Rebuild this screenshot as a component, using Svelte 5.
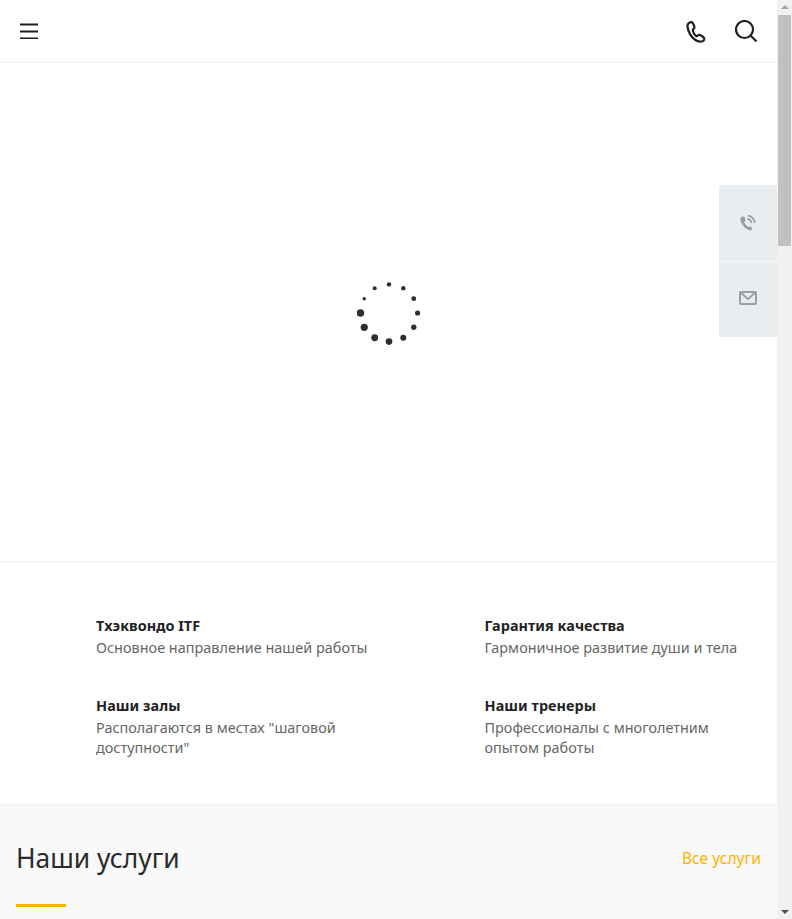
<script>
  const features = [
    { title: 'Тхэквондо ITF', text: 'Основное направление нашей работы' },
    { title: 'Гарантия качества', text: 'Гармоничное развитие души и тела' },
    { title: 'Наши залы', text: 'Располагаются в местах "шаговой доступности"' },
    { title: 'Наши тренеры', text: 'Профессионалы с многолетним опытом работы' }
  ];
  const sizes = [2.2, 2.2, 2.4, 2.6, 2.7, 3, 3.3, 3.4, 3.6, 3.8, 1.7, 2];
  const dots = sizes.map((r, i) => {
    const a = (i * 30 * Math.PI) / 180;
    return { r, x: 32 + 28.6 * Math.sin(a), y: 32 - 28.6 * Math.cos(a) };
  });
</script>

<div class="window">
  <div class="page">
    <header class="header">
      <button class="icon-btn" aria-label="Меню">
        <svg width="18" height="16" viewBox="0 0 18 16"><path d="M0 1.5h18M0 8.5h18M0 15.5h18" stroke="#1f1f1f" stroke-width="2" fill="none"/></svg>
      </button>
      <div class="header-right">
        <button class="icon-btn phone" aria-label="Телефон">
          <svg width="20" height="22" viewBox="0 0 20 22" fill="none" stroke="#1f1f1f" stroke-width="2.2" stroke-linejoin="round"><path d="M4.4 1.2 C2.4 1.8 1.2 3.6 1.6 6 C2.2 10.4 4.8 15.8 9.4 19 C12.2 20.9 16.2 21.4 17.8 19.4 C18.8 18 18.2 16.6 16.6 15.5 C15.2 14.5 13.6 13.6 12.6 14.1 C11.6 14.6 11.2 15.4 10.2 14.9 C8.6 14.1 6.6 10.6 6.8 9 C7 8 8.2 7.8 8.4 6.6 C8.6 5.2 7.6 3.4 6.8 2.2 C6.2 1.2 5.3 0.9 4.4 1.2 Z"/></svg>
        </button>
        <button class="icon-btn" aria-label="Поиск">
          <svg width="22" height="22" viewBox="0 0 22 22" fill="none" stroke="#1f1f1f" stroke-width="2.2"><circle cx="9.5" cy="9.5" r="8.5"/><path d="M15.8 15.8 21.5 21.5"/></svg>
        </button>
      </div>
    </header>

    <section class="hero">
      <svg class="spinner" width="64" height="64" viewBox="0 0 64 64">
        {#each dots as d}
          <circle cx={d.x} cy={d.y} r={d.r} fill="#2f2f2f"/>
        {/each}
      </svg>
    </section>

    <section class="features">
      {#each features as f}
        <div class="feature">
          <div class="f-title">{f.title}</div>
          <div class="f-text">{f.text}</div>
        </div>
      {/each}
    </section>

    <section class="services">
      <div class="services-head">
        <h2>Наши услуги</h2>
        <a href="#services">Все услуги</a>
      </div>
      <div class="rule"></div>
    </section>

    <aside class="side">
      <div class="side-item">
        <svg width="18" height="18" viewBox="0 0 18 18" fill="none"><path d="M3.2 2.6 C1.6 3.4 1 5 1.6 7 C2.6 10.4 6 14.6 9.6 16 C11.4 16.6 13 16.2 13.6 14.8 L11.2 12 L9.4 13 C8 12.4 5.6 9.4 5.2 7.8 L6.8 6.4 L5.4 2.8 Z" fill="#9a9fa8"/><path d="M8.5 4.8 C10.6 5.2 12.2 6.8 12.6 9M9 1.6 C12.4 2 15.4 5 15.8 8.6" stroke="#9a9fa8" stroke-width="1.7"/></svg>
      </div>
      <div class="side-item">
        <svg width="18" height="14" viewBox="0 0 18 14" fill="none" stroke="#9a9fa8" stroke-width="2"><rect x="1" y="1" width="16" height="12" rx="1"/><path d="M2 2 9 8 16 2"/></svg>
      </div>
    </aside>
  </div>

  <div class="scrollbar">
    <div class="arrow up"></div>
    <div class="thumb"></div>
    <div class="track"></div>
    <div class="arrow down"></div>
  </div>
</div>

<style>
  :global(body) { margin: 0; background: #fff; }
  .window {
    display: flex;
    height: 919px;
    overflow: hidden;
    font-family: "Noto Sans", sans-serif;
  }
  .page { position: relative; flex: 1; min-width: 0; display: flex; flex-direction: column; }
  .header {
    display: flex;
    align-items: center;
    justify-content: space-between;
    height: 62px;
    padding: 0 20px;
    border-bottom: 1px solid #f1f1f1;
  }
  .header-right { display: flex; align-items: center; gap: 29px; }
  .icon-btn { display: flex; padding: 0; border: 0; background: none; }
  .phone { margin-top: 2px; }
  .hero {
    height: 499px;
    display: flex;
    align-items: center;
    justify-content: center;
    border-bottom: 1px solid #efefef;
  }
  .features {
    display: grid;
    grid-template-columns: 1fr 1fr;
    row-gap: 20px;
    padding: 53px 0 46px;
    border-bottom: 2px solid #f3f3f3;
    color: #666;
  }
  .feature { min-height: 60px; padding: 0 16px 0 96px; }
  .f-title { font-size: 14.4px; font-weight: 700; line-height: 20px; color: #222; margin-bottom: 2px; letter-spacing: 0.05px; }
  .f-text { font-size: 14.4px; line-height: 20px; letter-spacing: 0.03px; }
  .services { flex: 1; background: #f9f9f9; padding: 31px 16px 0; }
  .services-head { display: flex; align-items: center; justify-content: space-between; }
  h2 { margin: 0; font: 400 26.4px/42px "Noto Sans", sans-serif; color: #2b2b2b; }
  a { font: 400 15.6px/20px "Noto Sans", sans-serif; color: #ffb400; text-decoration: none; }
  .rule { width: 50px; height: 3px; margin-top: 25px; background: #ffb400; }
  .side { position: absolute; top: 185px; right: 0; width: 58px; border-radius: 3px 0 0 3px; overflow: hidden; }
  .side-item { display: flex; align-items: center; justify-content: center; height: 76px; background: #e9edf0; }
  .side-item + .side-item { border-top: 1px solid #f5f7f8; height: 76px; padding-bottom: 4px; box-sizing: border-box; }
  .scrollbar { width: 15px; display: flex; flex-direction: column; background: #f1f1f1; }
  .arrow { height: 15px; position: relative; }
  .arrow::after { content: ""; position: absolute; left: 3.5px; border-left: 4px solid transparent; border-right: 4px solid transparent; }
  .up::after { top: 5px; border-bottom: 4px solid #a3a3a3; }
  .down::after { top: 6px; border-top: 4px solid #505050; }
  .thumb { height: 231px; background: #c1c1c1; margin: 0 1px; }
  .track { flex: 1; }
</style>
